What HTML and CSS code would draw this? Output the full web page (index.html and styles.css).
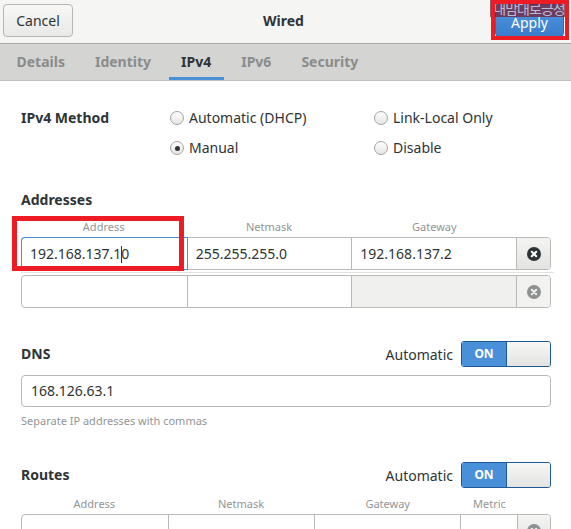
FILE: index.html
```html
<!DOCTYPE html>
<html lang="en">
  <head>
    <meta charset="UTF-8" />
    <meta name="viewport" content="width=device-width, initial-scale=1.0" />
    <title>Wired</title>
    <link rel="stylesheet" href="styles.css">
  </head>
  <body>
    <header class="headerbar">
      <button class="btn cancel">Cancel</button>
      <div class="title">Wired</div>
      <button class="btn apply">Apply</button>
      <div class="watermark">내맘대로긍정</div>
      <div class="mark mark-apply"></div>
    </header>

    <nav class="tabs">
      <a href="#">Details</a>
      <a href="#">Identity</a>
      <a href="#" class="active">IPv4</a>
      <a href="#">IPv6</a>
      <a href="#">Security</a>
    </nav>

    <main class="content">
      <section class="method">
        <div class="label">IPv4 Method</div>
        <label class="radio"><span class="dot"></span>Automatic (DHCP)</label>
        <label class="radio"><span class="dot"></span>Link-Local Only</label>
        <div></div>
        <label class="radio"><span class="dot checked"></span>Manual</label>
        <label class="radio"><span class="dot"></span>Disable</label>
      </section>

      <section class="addresses">
        <h3>Addresses</h3>
        <div class="cols cols-addr">
          <span>Address</span>
          <span>Netmask</span>
          <span>Gateway</span>
          <span></span>
        </div>
        <div class="row cols-addr">
          <div class="cell focus">192.168.137.1<span class="caret"></span>0</div>
          <div class="cell">255.255.255.0</div>
          <div class="cell">192.168.137.2</div>
          <div class="cell del">
            <svg width="14" height="14" viewBox="0 0 14 14"><circle cx="7" cy="7" r="7" fill="#2e3436"/><path d="M4.8 4.8 L9.2 9.2 M9.2 4.8 L4.8 9.2" stroke="#fff" stroke-width="2" stroke-linecap="round"/></svg>
          </div>
        </div>
        <div class="sep"></div>
        <div class="row cols-addr">
          <div class="cell"></div>
          <div class="cell"></div>
          <div class="cell off"></div>
          <div class="cell del off">
            <svg width="14" height="14" viewBox="0 0 14 14"><circle cx="7" cy="7" r="7" fill="#8e9192"/><path d="M4.8 4.8 L9.2 9.2 M9.2 4.8 L4.8 9.2" stroke="#eee" stroke-width="2" stroke-linecap="round"/></svg>
          </div>
        </div>
        <div class="mark mark-addr"></div>
      </section>

      <section class="dns">
        <div class="head">
          <h3>DNS</h3>
          <div class="auto">Automatic
            <div class="switch"><span>ON</span><i></i></div>
          </div>
        </div>
        <div class="entry">168.126.63.1</div>
        <p class="hint">Separate IP addresses with commas</p>
      </section>

      <section class="routes">
        <div class="head">
          <h3>Routes</h3>
          <div class="auto">Automatic
            <div class="switch"><span>ON</span><i></i></div>
          </div>
        </div>
        <div class="cols cols-route">
          <span>Address</span>
          <span>Netmask</span>
          <span>Gateway</span>
          <span>Metric</span>
          <span></span>
        </div>
        <div class="row cols-route">
          <div class="cell"></div>
          <div class="cell"></div>
          <div class="cell"></div>
          <div class="cell"></div>
          <div class="cell del">
            <svg width="14" height="14" viewBox="0 0 14 14"><circle cx="7" cy="7" r="7" fill="#8e9192"/><path d="M4.8 4.8 L9.2 9.2 M9.2 4.8 L4.8 9.2" stroke="#eee" stroke-width="2" stroke-linecap="round"/></svg>
          </div>
        </div>
      </section>
    </main>
  </body>
</html>
```

FILE: styles.css
```css
* {
  box-sizing: border-box;
  margin: 0;
  padding: 0;
}

body {
  font-family: "Noto Sans", "Noto Sans CJK KR", sans-serif;
  font-size: 14px;
  color: #2e3436;
  background: #fff;
  overflow: hidden;
}

.headerbar {
  position: relative;
  display: grid;
  grid-template-columns: 1fr auto 1fr;
  align-items: start;
  height: 44px;
  padding: 4px 7px 0 3px;
  background: #f5f5f4;
  border-bottom: 1px solid #a9a9a7;
}

.btn {
  font-family: inherit;
  font-size: 14px;
  height: 33px;
  border-radius: 4px;
  cursor: pointer;
}

.cancel {
  justify-self: start;
  width: 70px;
  color: #2e3436;
  border: 1px solid #b6b6b3;
  background: linear-gradient(#f7f7f6, #e9e9e7);
}

.title {
  font-weight: bold;
  font-size: 14px;
  line-height: 33px;
}

.apply {
  justify-self: end;
  width: 69px;
  padding-top: 3px;
  color: #fff;
  border: 1px solid #2a6bb5;
  background: linear-gradient(#5197e0, #3a7ecb);
}

.watermark {
  position: absolute;
  top: 0;
  right: 3px;
  width: 78px;
  height: 17px;
  font-size: 14px;
  line-height: 17px;
  letter-spacing: -1px;
  text-align: center;
  color: #b9bcd6;
  background: rgba(120, 28, 48, 0.72);
}

.mark {
  position: absolute;
  border: 4px solid #ed1c24;
}

.mark-apply {
  top: 0;
  right: 2px;
  width: 78px;
  height: 40px;
}

.tabs {
  display: flex;
  height: 37px;
  padding-left: 4px;
  gap: 5px;
  background: #d4d4d2;
  border-bottom: 1px solid #bdbdbb;
}

.tabs a {
  padding: 0 12.5px;
  line-height: 36px;
  color: #8a8c8c;
  font-weight: bold;
  text-decoration: none;
}

.tabs a.active {
  color: #2e3436;
  box-shadow: inset 0 -3px #4a90d9;
}

.content {
  padding: 0 20px 0 21px;
}

h3 {
  font-size: 14px;
  font-weight: bold;
  line-height: 20px;
}

.method {
  display: grid;
  grid-template-columns: 149px 204px auto;
  row-gap: 10px;
  margin-top: 27px;
  line-height: 20px;
}

.method .label {
  font-weight: bold;
}

.radio {
  display: flex;
  align-items: center;
  gap: 5px;
}

.dot {
  width: 14px;
  height: 14px;
  border-radius: 50%;
  border: 1px solid #a4a5a3;
  background: linear-gradient(#fdfdfd, #e6e6e5);
  display: flex;
  align-items: center;
  justify-content: center;
}

.dot.checked::after {
  content: "";
  width: 5px;
  height: 5px;
  border-radius: 50%;
  background: #2e3436;
}

.addresses {
  position: relative;
  margin-top: 32px;
}

.cols {
  display: grid;
  margin-top: 10px;
  font-size: 11px;
  line-height: 14px;
  color: #929595;
  text-align: center;
}

.cols-addr {
  grid-template-columns: 1fr 1fr 1fr 34px;
}

.cols-route {
  grid-template-columns: 1fr 1fr 1fr 57px 33px;
}

.row {
  display: grid;
  height: 33px;
  margin-top: 3px;
  border: 1px solid #bab9b6;
  border-radius: 4px;
  background: #fff;
}

.cell {
  padding-left: 8px;
  line-height: 31px;
  border-left: 1px solid #bab9b6;
  white-space: nowrap;
}

.cell:first-child {
  border-left: none;
  border-radius: 3px 0 0 3px;
}

.cell.focus {
  box-shadow: 0 0 0 1px #4a90d9;
  position: relative;
}

.caret {
  display: inline-block;
  width: 1px;
  height: 17px;
  margin: 0 -1px 0 0;
  vertical-align: -4px;
  background: #2e3436;
}

.cell.off {
  background: #f0f0ef;
}

.cell.del {
  padding: 0;
  display: flex;
  align-items: center;
  justify-content: center;
  border-radius: 0 3px 3px 0;
  background: linear-gradient(#f4f4f3, #e3e3e1);
}

.cell.del.off {
  background: #f2f2f1;
}

.sep {
  height: 1px;
  margin: 2px -3px 2px 0;
  background: #e2e2e0;
}

.sep + .row {
  margin-top: 0;
}

.mark-addr {
  top: 26px;
  left: -9px;
  width: 172px;
  height: 55px;
  border-width: 5px;
}

.dns {
  margin-top: 33px;
}

.head {
  display: flex;
  justify-content: space-between;
  align-items: center;
}

.auto {
  display: flex;
  align-items: center;
  gap: 8px;
}

.switch {
  display: flex;
  width: 90px;
  height: 26px;
  border: 1px solid #1f5896;
  border-radius: 3px;
  overflow: hidden;
}

.switch span {
  width: 44px;
  background: #4a90d9;
  color: #fff;
  font-size: 12px;
  font-weight: bold;
  line-height: 24px;
  text-align: center;
}

.switch i {
  flex: 1;
  border-left: 1px solid #1f5896;
  background: linear-gradient(#f7f7f6, #e3e3e1);
}

.entry {
  height: 32px;
  margin-top: 8px;
  padding-left: 9px;
  line-height: 30px;
  border: 1px solid #bab9b6;
  border-radius: 4px;
}

.hint {
  margin-top: 7px;
  font-size: 11px;
  line-height: 14px;
  color: #929595;
}

.routes {
  margin-top: 34px;
}

.routes .cols {
  margin-top: 9px;
}
```
